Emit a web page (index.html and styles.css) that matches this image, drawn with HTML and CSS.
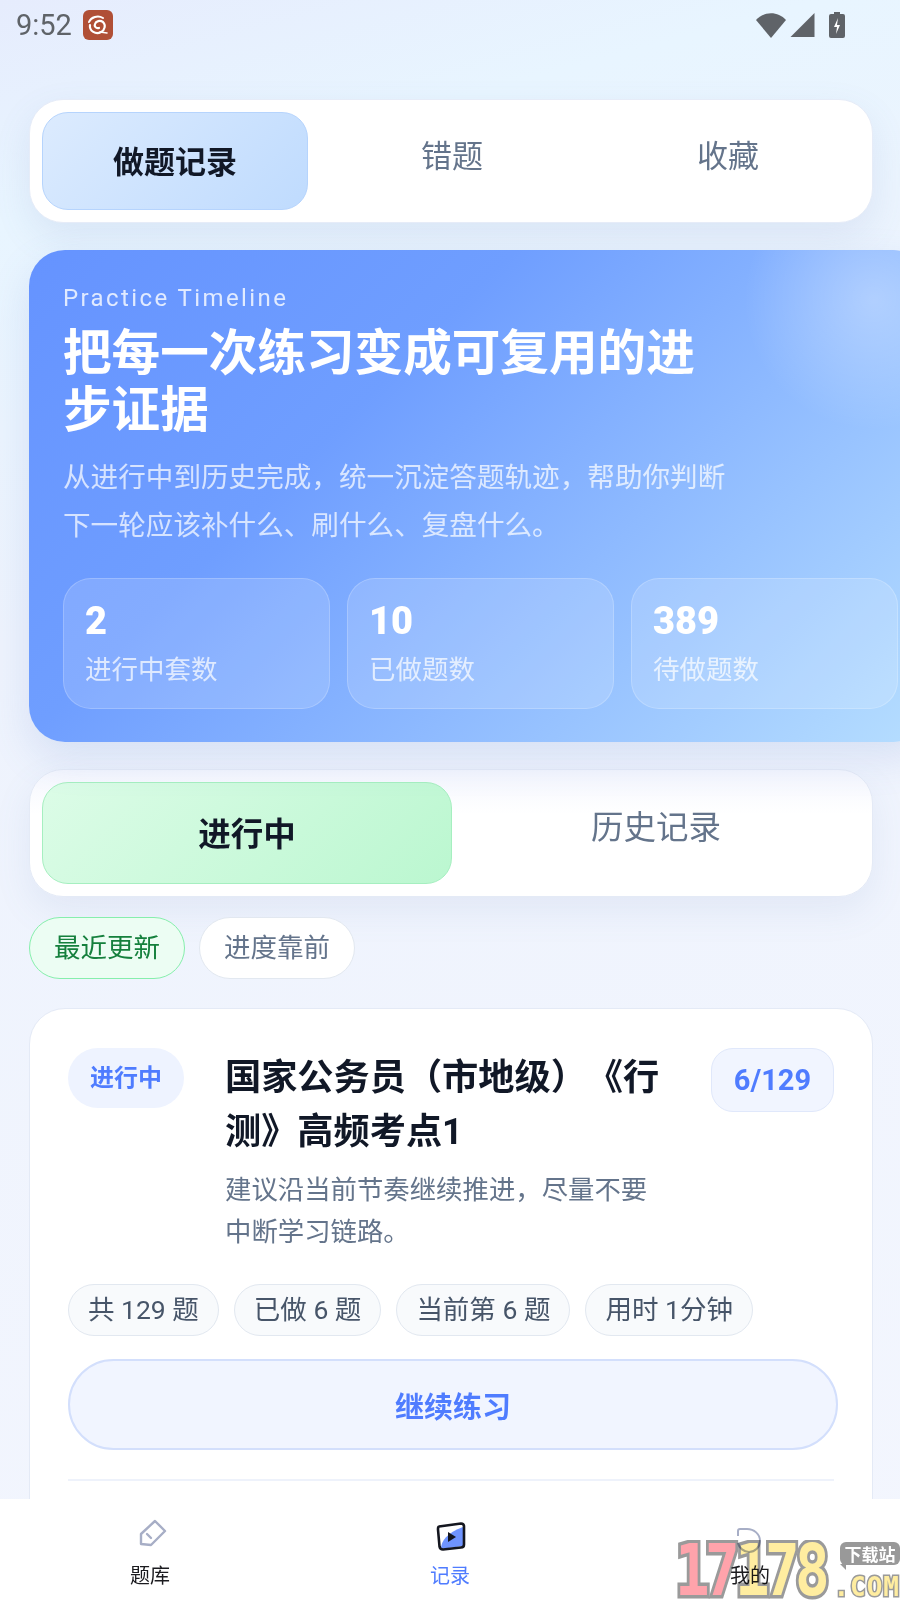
FILE: index.html
```html
<!DOCTYPE html>
<html lang="zh-CN">
<head>
    <meta charset="UTF-8">
    <meta name="viewport" content="width=device-width, initial-scale=1.0">
    <title>做题记录</title>
    <link rel="stylesheet" href="styles.css">
</head>
<body>
<div class="screen">

    <!-- status bar -->
    <div class="status">
        <span class="clock">9:52</span>
        <span class="app-icon">
            <svg width="30" height="30" viewBox="0 0 30 30" fill="none" stroke="#fff" stroke-linecap="round">
                <path d="M6 12c2-5 9-7 14-4" stroke-width="2"/>
                <path d="M7 15c-1 6 6 10 11 7 4-2 5-7 2-10-3-2-7-1-8 2-1 2 1 5 4 4" stroke-width="2.2"/>
                <path d="M17 22l7 1" stroke-width="1.6"/>
            </svg>
        </span>
        <span class="status-right">
            <svg width="30" height="26" viewBox="0 0 30 26"><path d="M0 8C8-1 22-1 30 8L15 26z" fill="#5f6368"/></svg>
            <svg width="25" height="26" viewBox="0 0 25 26"><path d="M24.500 1v24H0.500z" fill="#5f6368"/></svg>
            <svg class="battery" width="16" height="26" viewBox="0 0 16 26">
                <path d="M5 0h6v2h3a2 2 0 0 1 2 2v20a2 2 0 0 1-2 2H2a2 2 0 0 1-2-2V4a2 2 0 0 1 2-2h3z" fill="#5f6368"/>
                <path d="M9 6l-4 9h3l-1 7 4-9H8z" fill="#fff"/>
            </svg>
        </span>
    </div>

    <div class="content">
        <div class="tabs">
            <div class="tab active">做题记录</div>
            <div class="tab">错题</div>
            <div class="tab">收藏</div>
        </div>

        <div class="hero">
            <div class="eyebrow">Practice Timeline</div>
            <h1>把每一次练习变成可复用的进步证据</h1>
            <p>从进行中到历史完成，统一沉淀答题轨迹，帮助你判断下一轮应该补什么、刷什么、复盘什么。</p>
            <div class="stats">
                <div class="stat"><b>2</b><span>进行中套数</span></div>
                <div class="stat"><b>10</b><span>已做题数</span></div>
                <div class="stat"><b>389</b><span>待做题数</span></div>
            </div>
        </div>

        <div class="segment">
            <div class="seg-item active">进行中</div>
            <div class="seg-item">历史记录</div>
        </div>

        <div class="filters">
            <span class="filter active">最近更新</span>
            <span class="filter">进度靠前</span>
        </div>

        <div class="card">
            <div class="card-head">
                <span class="badge">进行中</span>
                <div class="card-main">
                    <h2>国家公务员（市地级）《行测》高频考点1</h2>
                    <p>建议沿当前节奏继续推进，尽量不要中断学习链路。</p>
                </div>
                <span class="count">6/129</span>
            </div>
            <div class="chips">
                <span class="chip">共 129 题</span>
                <span class="chip">已做 6 题</span>
                <span class="chip">当前第 6 题</span>
                <span class="chip">用时 1分钟</span>
            </div>
            <button class="continue">继续练习</button>
            <div class="card-line"></div>
        </div>
    </div>

    <!-- bottom nav -->
    <div class="nav">
        <div class="nav-item">
            <svg width="40" height="40" viewBox="0 0 40 40" fill="none" stroke="#a7aec6" stroke-width="2.400" stroke-linejoin="round" stroke-linecap="round">
                <path d="M11 29V19L25 6l10 10-14 14z"/>
                <path d="M17 19l4 4"/>
            </svg>
            <span>题库</span>
        </div>
        <div class="nav-item current">
            <svg width="40" height="40" viewBox="0 0 40 40">
                <path d="M9 12l24-3 1 22-23 3z" fill="#fff"/>
                <path d="M11 34c0-8 6-16 22-22v19z" fill="#6f94ff"/>
                <path d="M9 11.500l22-3q3 0 3 3l0 18q0 3-3 3l-18 2q-3 0-3.500-3l-1.500-17q0-3 1-3z" fill="none" stroke="#14161f" stroke-width="2.600" stroke-linejoin="round"/>
                <path d="M18 17l8 5-8 5z" fill="#14161f"/>
            </svg>
            <span>记录</span>
        </div>
        <div class="nav-item">
            <svg width="40" height="40" viewBox="0 0 40 40" fill="none" stroke="#a7aec6" stroke-width="2">
                <path d="M8 21v-5q0-2 2-2h7c7 0 13 5 13 12 0 6-5 11-11 11-5 0-10-4-11-9"/>
            </svg>
            <span>我的</span>
        </div>
    </div>

    <!-- download site watermark -->
    <div class="watermark">
        <span class="wm-digit pink">1</span><span class="wm-digit pink">7</span><span class="wm-digit yellow">1</span><span class="wm-digit yellow">7</span><span class="wm-digit yellow">8</span>
        <span class="wm-tag">下载站</span>
        <span class="wm-com">.COM</span>
    </div>

</div>
</body>
</html>
```

FILE: styles.css
```css
* {
    box-sizing: border-box;
}
body {
    margin: 0;
    font-family: Roboto, 'Noto Sans CJK SC', sans-serif;
    color: #111827;
    text-spacing-trim: space-all;
}
.screen {
    position: relative;
    width: 900px;
    height: 1600px;
    overflow: hidden;
    background: linear-gradient(165deg, #e6ecfd 0%, #e8f5ff 12%, #eef3fd 35%, #f3f6fe 100%);
}

/* status bar */
.status {
    display: flex;
    align-items: center;
    height: 50px;
    padding: 0 25px 0 16px;
}
.clock {
    font-size: 29px;
    color: #5f6368;
}
.app-icon {
    display: flex;
    width: 30px;
    height: 30px;
    margin-left: 11px;
    background: #b04f36;
    border-radius: 6px;
}
.status-right {
    display: flex;
    align-items: center;
    gap: 4px;
    margin-left: auto;
    padding-right: 30px;
}
.battery {
    margin-left: 10px;
}

.content {
    padding: 49px 27px 0 29px;
}

/* top tabs */
.tabs {
    display: flex;
    gap: 12px;
    height: 124px;
    padding: 12px;
    background: #fff;
    border: 1px solid #e6ecf8;
    border-radius: 34px;
    box-shadow: 0 14px 36px rgba(100, 125, 180, 0.12);
}
.tab {
    flex: 1;
    display: flex;
    align-items: center;
    justify-content: center;
    padding-bottom: 16px;
    font-size: 31px;
    color: #64748b;
    border-radius: 26px;
}
.tab.active {
    padding-bottom: 4px;
    font-weight: 700;
    color: #111827;
    background: linear-gradient(135deg, #dcebfe, #bfdbfe);
    border: 1px solid #b6d4fd;
}

/* hero */
.hero {
    position: relative;
    width: 900px;
    height: 492px;
    margin-top: 27px;
    padding: 33px 31px 0 34px;
    color: #fff;
    border-radius: 36px;
    background:
        radial-gradient(circle at 845px 50px, rgba(255, 255, 255, 0.3), rgba(255, 255, 255, 0) 130px),
        linear-gradient(135deg, #6593ff 0%, #6f9eff 35%, #b6deff 100%);
    box-shadow: 0 16px 40px rgba(90, 125, 200, 0.16);
}
.eyebrow {
    height: 30px;
    font-size: 24px;
    line-height: 30px;
    letter-spacing: 2.400px;
    color: rgba(255, 255, 255, 0.8);
}
.hero h1 {
    width: 650px;
    margin: 12px 0 0;
    font-size: 48.600px;
    line-height: 57px;
    font-weight: 700;
}
.hero p {
    width: 680px;
    margin: 15px 0 0;
    font-size: 27.600px;
    line-height: 48px;
    color: rgba(255, 255, 255, 0.72);
}
.stats {
    display: flex;
    gap: 17px;
    margin-top: 28px;
}
.stat {
    display: flex;
    flex-direction: column;
    width: 267px;
    height: 131px;
    padding: 20px 21px 0;
    background: rgba(255, 255, 255, 0.15);
    border: 1px solid rgba(255, 255, 255, 0.2);
    border-radius: 28px;
}
.stat b {
    font-size: 38px;
    font-weight: 900;
    line-height: 44px;
}
.stat span {
    margin-top: 8px;
    font-size: 26.500px;
    line-height: 38px;
    color: rgba(255, 255, 255, 0.72);
}

/* progress switch */
.segment {
    display: flex;
    height: 128px;
    margin-top: 27px;
    padding: 12px;
    background: linear-gradient(180deg, #f4f6fe, #fff 35%);
    border: 1px solid #e4eaf6;
    border-radius: 34px;
    box-shadow: 0 14px 36px rgba(100, 125, 180, 0.1);
}
.seg-item {
    flex: 1;
    display: flex;
    align-items: center;
    justify-content: center;
    padding-bottom: 18px;
    font-size: 32.500px;
    color: #64748b;
    border-radius: 26px;
}
.seg-item.active {
    padding-bottom: 4px;
    font-weight: 700;
    color: #111827;
    background: linear-gradient(135deg, #dcfce7, #bbf7d0);
    border: 1px solid #a6efc0;
}

.filters {
    display: flex;
    gap: 14px;
    margin-top: 20px;
}
.filter {
    height: 62px;
    padding: 0 24px;
    font-size: 26.500px;
    line-height: 59px;
    color: #64748b;
    background: #fff;
    border: 1px solid #e2e8f0;
    border-radius: 31px;
}
.filter.active {
    color: #15803d;
    background: #ecfdf3;
    border-color: #86efac;
}

/* record card */
.card {
    height: 640px;
    margin-top: 29px;
    padding: 39px 38px 0;
    background: #fff;
    border: 1px solid #e4eaf6;
    border-radius: 36px;
}
.card-head {
    display: flex;
    align-items: flex-start;
}
.badge {
    flex: none;
    width: 116px;
    height: 60px;
    font-size: 24px;
    font-weight: 700;
    line-height: 60px;
    text-align: center;
    color: #4f7cff;
    background: #eef3ff;
    border-radius: 30px;
}
.card-main {
    width: 450px;
    margin-left: 41px;
}
.card-main h2 {
    margin: 3px 0 0;
    font-size: 36.200px;
    line-height: 54px;
    font-weight: 700;
}
.card-main p {
    width: 430px;
    margin: 10px 0 0;
    font-size: 26.400px;
    line-height: 42px;
    color: #64748b;
}
.count {
    flex: none;
    width: 123px;
    height: 64px;
    margin-left: auto;
    font-size: 29px;
    font-weight: 700;
    line-height: 62px;
    text-align: center;
    color: #4f7cff;
    background: #f1f5ff;
    border: 1px solid #e0e8fb;
    border-radius: 22px;
}
.chips {
    display: flex;
    gap: 15px;
    margin-top: 31px;
}
.chip {
    height: 52px;
    padding: 0 19px;
    font-size: 26.500px;
    line-height: 49px;
    color: #475569;
    background: #f8fafc;
    border: 1px solid #e2e8f0;
    border-radius: 26px;
}
.continue {
    display: block;
    width: 770px;
    height: 91px;
    margin-top: 23px;
    padding: 0;
    font-family: inherit;
    font-size: 29px;
    font-weight: 700;
    color: #4f7cff;
    background: #f1f5ff;
    border: 2.500px solid #d3dffc;
    border-radius: 46px;
}
.card-line {
    height: 2px;
    margin-top: 29px;
    background: #eef2fb;
}

/* bottom nav */
.nav {
    position: absolute;
    left: 0;
    right: 0;
    bottom: 0;
    display: grid;
    grid-template-columns: repeat(3, 1fr);
    height: 101px;
    background: #fff;
}
.nav-item {
    display: flex;
    flex-direction: column;
    align-items: center;
    padding-top: 16px;
    font-size: 20px;
    color: #1b1b1f;
}
.nav-item svg {
    display: block;
}
.nav-item span {
    margin-top: 7px;
    line-height: 28px;
}
.nav-item.current {
    color: #4f7cff;
}

/* watermark lies over the nav corner */
.watermark {
    position: absolute;
    left: 672px;
    top: 1540px;
    width: 228px;
    height: 60px;
    overflow: hidden;
    mix-blend-mode: multiply;
    font-family: 'DejaVu Sans Mono', monospace;
    font-weight: 700;
}
.wm-digit {
    position: relative;
    display: inline-block;
    width: 30px;
    font-size: 72px;
    line-height: 60px;
    text-align: center;
    transform: scaleX(0.8);
    -webkit-text-stroke: 7px #9a9a9a;
    paint-order: stroke fill;
    vertical-align: top;
}
.pink {
    color: #ffa3ab;
}
.yellow {
    color: #ffeda0;
}
.wm-tag {
    position: absolute;
    right: 0;
    top: 2px;
    width: 60px;
    height: 23px;
    font-family: 'Noto Sans CJK SC', sans-serif;
    font-size: 17px;
    line-height: 23px;
    text-align: center;
    color: #fff;
    background: #999;
    border-radius: 6px;
}
.wm-tag::after {
    content: "";
    position: absolute;
    left: 0;
    bottom: -5px;
    border-top: 6px solid #999;
    border-left: 6px solid transparent;
}
.wm-com {
    position: absolute;
    right: 0;
    bottom: 0;
    font-size: 26px;
    line-height: 26px;
    letter-spacing: 1px;
    color: #ffeda0;
    -webkit-text-stroke: 3px #9a9a9a;
    paint-order: stroke fill;
}
```
